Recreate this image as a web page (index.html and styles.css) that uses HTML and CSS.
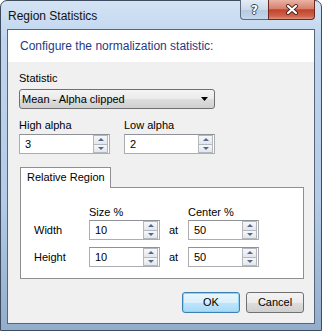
FILE: index.html
```html
<!DOCTYPE html>
<html lang="en">
<head>
  <meta charset="UTF-8" />
  <title>Region Statistics</title>
  <link rel="stylesheet" href="styles.css">
</head>
<body>
  <div class="window">
    <div class="titlebar">
      <div class="title">Region Statistics</div>
      <div class="caption">
        <div class="cap-btn help">?</div>
        <div class="cap-btn close">
          <svg width="14" height="11" viewBox="0 0 14 11">
            <path d="M3 2 L11 9 M11 2 L3 9" stroke="#4a2620" stroke-width="4" stroke-linecap="round"/>
            <path d="M3 2 L11 9 M11 2 L3 9" stroke="#fff" stroke-width="2.2" stroke-linecap="round"/>
          </svg>
        </div>
      </div>
    </div>

    <div class="client">
      <div class="instruction">Configure the normalization statistic:</div>

      <div class="content">
        <div class="lbl">Statistic</div>
        <div class="combo">
          <span>Mean - Alpha clipped</span>
          <svg width="7" height="4" viewBox="0 0 7 4"><path d="M0 0 H7 L3.5 4 Z" fill="#000"/></svg>
        </div>

        <div class="alpha-row">
          <div class="field">
            <div class="lbl">High alpha</div>
            <div class="spin">
              <div class="value">3</div>
              <div class="arrows"><div class="arr up"></div><div class="arr down"></div></div>
            </div>
          </div>
          <div class="field">
            <div class="lbl">Low alpha</div>
            <div class="spin">
              <div class="value">2</div>
              <div class="arrows"><div class="arr up"></div><div class="arr down"></div></div>
            </div>
          </div>
        </div>

        <div class="tabs">
          <div class="tab">Relative Region</div>
          <div class="tab-page">
            <div class="region-head">
              <span class="cell-label"></span>
              <span class="cell-spin">Size %</span>
              <span class="cell-at"></span>
              <span class="cell-spin">Center %</span>
            </div>
            <div class="region-row">
              <span class="cell-label">Width</span>
              <div class="spin small">
                <div class="value">10</div>
                <div class="arrows"><div class="arr up"></div><div class="arr down"></div></div>
              </div>
              <span class="cell-at">at</span>
              <div class="spin small">
                <div class="value">50</div>
                <div class="arrows"><div class="arr up"></div><div class="arr down"></div></div>
              </div>
            </div>
            <div class="region-row">
              <span class="cell-label">Height</span>
              <div class="spin small">
                <div class="value">10</div>
                <div class="arrows"><div class="arr up"></div><div class="arr down"></div></div>
              </div>
              <span class="cell-at">at</span>
              <div class="spin small">
                <div class="value">50</div>
                <div class="arrows"><div class="arr up"></div><div class="arr down"></div></div>
              </div>
            </div>
          </div>
        </div>

        <div class="buttons">
          <div class="btn default">OK</div>
          <div class="btn">Cancel</div>
        </div>
      </div>
    </div>
  </div>
</body>
</html>
```

FILE: styles.css
```css
body {
  margin: 0;
  font-family: "Liberation Sans", Arial, sans-serif;
  font-size: 11px;
  color: #000;
  background: #fff;
}
.window {
  width: 322px;
  height: 331px;
  box-sizing: border-box;
  border: 1px solid #3e4c60;
  border-radius: 7px 7px 0 0;
  background: linear-gradient(#d3e3f4 0, #bfd5ed 40px, #b3cbe6 200px, #93adcb 100%);
  padding: 0 6px 6px;
  display: flex;
  flex-direction: column;
}
.titlebar {
  height: 28px;
  display: flex;
  justify-content: space-between;
  align-items: flex-start;
}
.title {
  font-size: 12px;
  line-height: 14px;
  padding: 8px 0 0 1px;
  color: #111;
}
.caption {
  display: flex;
  margin-top: -1px;
}
.cap-btn {
  height: 20px;
  box-sizing: border-box;
  border: 1px solid #5d6b80;
  border-top: none;
  display: flex;
  align-items: center;
  justify-content: center;
}
.help {
  width: 28px;
  border-right: none;
  border-radius: 0 0 0 4px;
  background: linear-gradient(#e3ecf6, #cbd9ea 50%, #b6c9df 51%, #c4d6ea);
  color: #fff;
  font-family: "DejaVu Sans", sans-serif;
  font-weight: bold;
  font-size: 12px;
  text-shadow: 1px 0 0 #3b4758, -1px 0 0 #3b4758, 0 1px 0 #3b4758, 0 -1px 0 #3b4758;
}
.close {
  width: 47px;
  border-color: #6b2a20;
  border-radius: 0 0 4px 0;
  background: linear-gradient(#eab3a6, #d7806c 45%, #c2422a 52%, #d0644d 85%, #e0937c);
}
.client {
  flex: 1;
  border: 1px solid #55657a;
  background: #f0f0f0;
  display: flex;
  flex-direction: column;
}
.instruction {
  background: #fff;
  height: 32px;
  line-height: 32px;
  font-size: 12px;
  padding-left: 12px;
  color: #1e3a87;
}
.content {
  padding: 10px 10px 0 11px;
}
.lbl {
  line-height: 13px;
  margin-bottom: 4px;
}
.combo {
  width: 196px;
  height: 20px;
  box-sizing: border-box;
  border: 1px solid #707070;
  border-radius: 3px;
  background: linear-gradient(#f4f4f4, #ebebeb 50%, #dddddd 51%, #d0d0d0);
  display: flex;
  align-items: center;
  justify-content: space-between;
  padding: 0 6px 0 2px;
}
.alpha-row {
  display: flex;
  gap: 14px;
  margin-top: 10px;
}
.alpha-row .lbl {
  margin-bottom: 2px;
}
.spin {
  width: 91px;
  height: 20px;
  box-sizing: border-box;
  border: 1px solid #abadb3;
  border-top-color: #8e9197;
  background: #fff;
  display: flex;
}
.spin.small {
  width: 71px;
}
.spin .value {
  flex: 1;
  padding-left: 5px;
  line-height: 18px;
}
.arrows {
  width: 15px;
  display: flex;
  flex-direction: column;
  padding: 0 1px 0 0;
}
.arr {
  flex: 1;
  border: 1px solid #b3b7bf;
  background: linear-gradient(#f7f7f7, #e4e6ea);
  display: flex;
  align-items: center;
  justify-content: center;
}
.arr + .arr {
  border-top: none;
}
.arr::after {
  content: "";
  border-left: 3px solid transparent;
  border-right: 3px solid transparent;
}
.arr.up::after {
  border-bottom: 3px solid #4d6a96;
}
.arr.down::after {
  border-top: 3px solid #4d6a96;
}
.tabs {
  margin: 13px 0 0 1px;
}
.tab {
  position: relative;
  z-index: 1;
  width: 91px;
  height: 21px;
  box-sizing: border-box;
  border: 1px solid #8e8f8f;
  border-bottom: none;
  background: #fff;
  padding: 3px 0 0 6px;
  line-height: 13px;
  margin-bottom: -1px;
}
.tab-page {
  border: 1px solid #8e8f8f;
  background: #fff;
  padding: 18px 0 11px 13px;
}
.region-head,
.region-row {
  display: flex;
  align-items: center;
}
.region-head {
  height: 13px;
  margin-bottom: 1px;
  line-height: 13px;
}
.region-row {
  height: 20px;
}
.region-row + .region-row {
  margin-top: 7px;
}
.cell-label {
  width: 55px;
}
.cell-spin {
  width: 71px;
  margin-left: -1px;
  padding-left: 1px;
}
.cell-at {
  width: 28px;
  padding-left: 9px;
  box-sizing: border-box;
}
.buttons {
  display: flex;
  justify-content: flex-end;
  gap: 6px;
  margin-top: 13px;
}
.btn {
  width: 58px;
  height: 21px;
  box-sizing: border-box;
  border: 1px solid #707070;
  border-radius: 3px;
  background: linear-gradient(#f3f3f3, #ebebeb 50%, #dddddd 51%, #cfcfcf);
  text-align: center;
  line-height: 19px;
}
.btn.default {
  border-color: #3c7fb1;
  background: linear-gradient(#eaf6fd, #d9f0fc 50%, #bee6fd 51%, #a7d9f5);
  box-shadow: inset 0 0 0 1px #8fd4f6;
}
```
